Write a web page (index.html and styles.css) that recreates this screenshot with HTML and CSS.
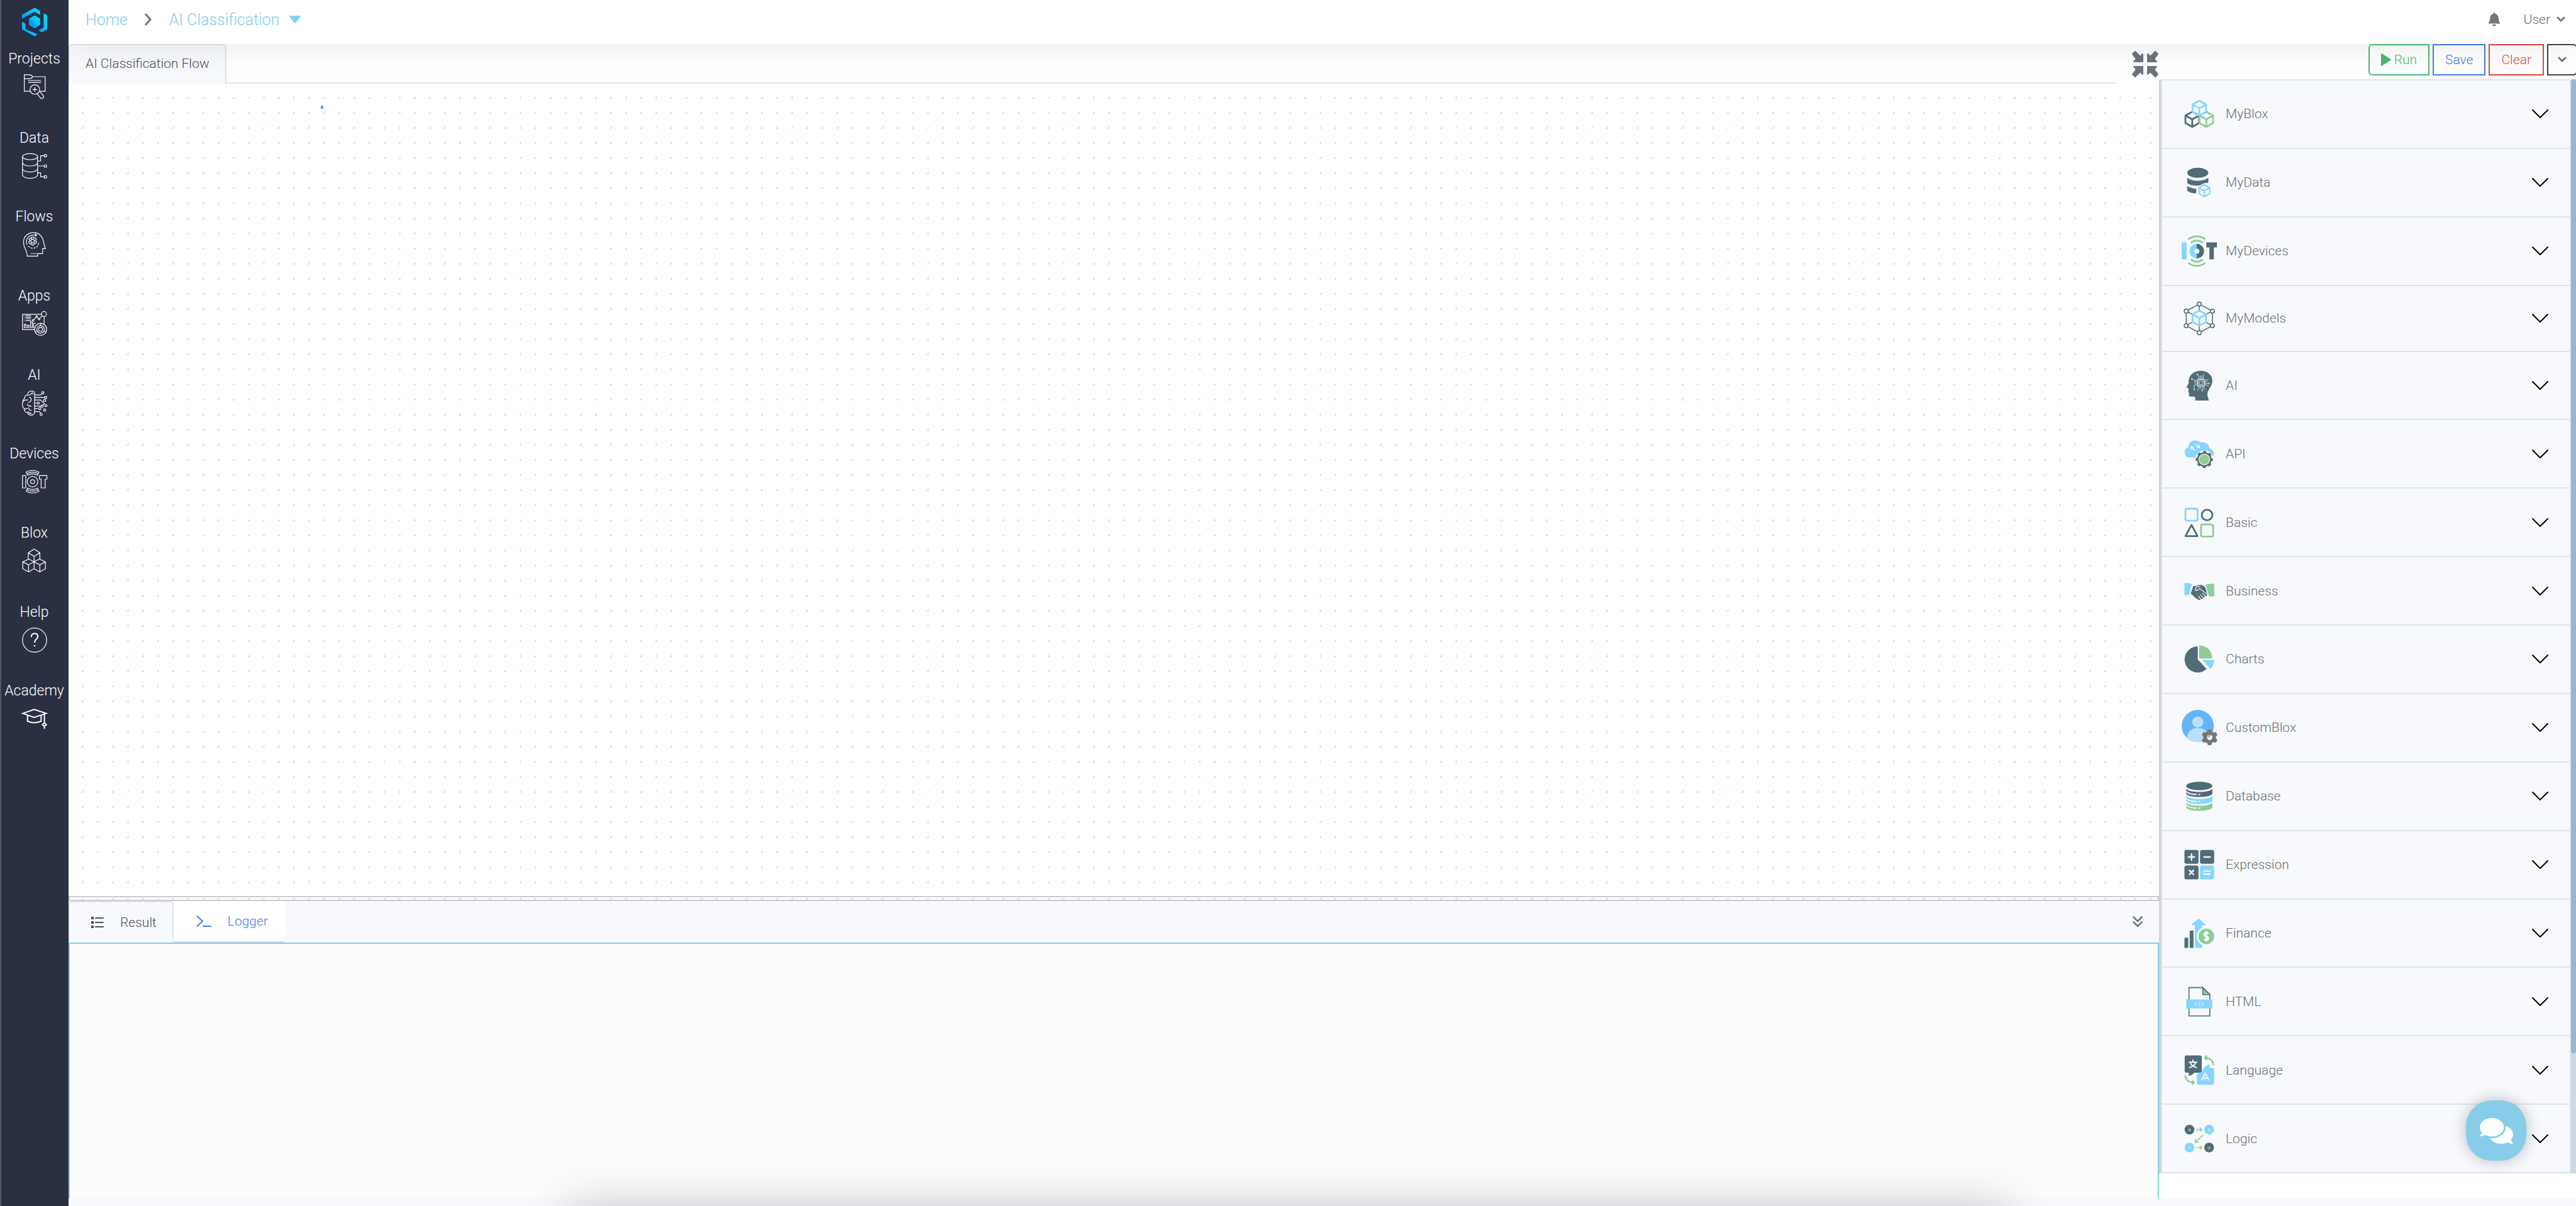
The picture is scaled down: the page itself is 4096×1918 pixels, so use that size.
FILE: index.html
```html
<!DOCTYPE html>
<html lang="en" dir="ltr">
<head>

<meta charset="utf-8">
<title>AI Classification</title>
<link rel="stylesheet" href="styles.css">

</head>
<body>

<!-- shared shapes -->
<svg class="defs" aria-hidden="true">
  <defs>
    <linearGradient id="brand" x1="0" y1="1" x2="1" y2="0">
      <stop offset="0" stop-color="#0a9bff"/>
      <stop offset="1" stop-color="#00e5ff"/>
    </linearGradient>
    <symbol id="cube" viewBox="0 0 32 34">
      <path d="M16 2 29.500 9.500V24.500L16 32 2.500 24.500V9.500zM2.500 9.500 16 17l13.500-7.500M16 17v15" fill="none" stroke="currentColor" stroke-width="3.500"/>
    </symbol>
    <symbol id="down" viewBox="0 0 26 14">
      <path d="M1 1l12 12L25 1" fill="none" stroke="#000" stroke-width="2" stroke-linecap="round"/>
    </symbol>
    <symbol id="down-sm" viewBox="0 0 14 10">
      <path d="M2 2l5 5 5-5" fill="none" stroke="#6c7a87" stroke-width="3" stroke-linecap="round"/>
    </symbol>
  </defs>
</svg>

<nav id="sidebar">
  <a class="logo" href="#" title="Home">
    <svg viewBox="0 0 50 57" width="40" height="46">
      <g fill="url(#brand)">
        <path d="M0 14 25 0l11 6.500v8L25 8 0 22z"/>
        <path d="M0 28l7 4v11l24 10-6 4L0 43z"/>
        <path d="M43 11l7 4v28l-11 6-6-4 10-6z"/>
        <path d="M25 15l11 7v12l-11 7-11-7V22z"/>
      </g>
      <path d="M14 22l11 7v12l-11-7z" fill="#0a8fe8" opacity=".6"/>
      <path d="M25 29l11-7v12l-11 7z" fill="#00b4f5" opacity=".6"/>
    </svg>
  </a>
  <ul>
    <li><a href="#">Projects
      <svg class="line" viewBox="0 0 50 50">
        <path d="M16 34H4.500V1H15q4 0 6 4h25v29H36M4.500 9H15q4 0 6-4M12 12.500h26M12 16.500h26"/>
        <circle cx="25.500" cy="30.500" r="9.500"/>
        <path d="M25.500 26v9M21 30.500h9M30 38.500l7 9q2 2 4.500 0t1-5l-7-8"/>
      </svg></a></li>
    <li><a href="#">Data
      <svg class="line" viewBox="0 0 50 50">
        <ellipse cx="16" cy="6.500" rx="15" ry="6"/>
        <path d="M1 6.500v37q3 6 15 6t15-6v-37M1 19q3 6 15 6t15-6M1 31q3 6 15 6t15-6M31 15h6V4.500h7M31 25h13M31 38.500h6v8h7"/>
        <circle cx="46.500" cy="4.500" r="2.500"/><circle cx="46.500" cy="25" r="2.500"/><circle cx="46.500" cy="46.500" r="2.500"/>
      </svg></a></li>
    <li><a href="#">Flows
      <svg class="line" viewBox="0 0 50 50">
        <path d="M10.500 48C11 36 3 34 3 20 3 8 13 1 23 1c13 0 19 9 21 24l2.500 8H41v10H31v5z"/>
        <path d="M10 25C6 14 14 6 22 6h6M26 3l3 3-3 3"/>
        <path d="M12 28q9 8 18 1 3-4 3-9" stroke-dasharray="4 2"/>
        <circle cx="21" cy="18" r="3.500"/>
        <path d="M19 10h4l.500 2.500 3-1 2 3-2 2.500 2.500 2-1.500 3.500h-3l-.500 3-4 .500-1.500-3-3.500.500-1.500-4 2.500-2-2-3 2.500-2.500 3 1z"/>
        <path d="M18 43h11" stroke-dasharray="2 1"/>
      </svg></a></li>
    <li><a href="#">Apps
      <svg class="line" viewBox="0 0 50 50">
        <path d="M25 36.500H1V6h38M44 10v15M7 9h11M7 12h11M7 15h11M7 18.500h11M4 9h1M4 12h1M4 15h1M4 18.500h1"/>
        <path d="M4.500 26H8v6.500H4.500zM11 28h3v4.500h-3zM17 21h3.500v11.500H17zM26 32.500h-3V24h4M23.500 17l4-5M30.500 12l2 3M35.500 14l5-5"/>
        <circle cx="22" cy="18" r="1.500"/><circle cx="29" cy="10.500" r="1.500"/><circle cx="34" cy="15.500" r="1.500"/>
        <circle cx="43.500" cy="5.500" r="5"/>
        <circle cx="37" cy="36" r="12"/><circle cx="37" cy="36" r="7.500"/><circle cx="37" cy="36" r="4"/>
        <path d="M37 24v4.500M26.500 41l4-2M47.500 41l-4-2"/>
      </svg></a></li>
    <li><a href="#">AI
      <svg class="line" viewBox="0 0 50 50">
        <path d="M25 5v40q-3 5-9 4-4-1-5-5-6 0-7-8-4-4-3-11t4-9q0-6 6-7 1-8 8-8 5 0 6 4M12 10q5-1 7-4t3 2M14 14q5 0 4 5t-6 4M1 25q1-7 11-6M10 27q3 5 9 4M5 36q4 1 6-1M13 34q1 6 6 6M12 42q3 4 7 4"/>
        <path d="M25 9h12l3-3M25 14h20M25 19h12l8 8M25 25h5M25 31h13M25 36h7M25 42h10l2 3M42 29l3-3"/>
        <circle cx="41.500" cy="4.500" r="2.200"/><circle cx="47" cy="14" r="2.200"/><circle cx="45" cy="20" r="2.200"/><circle cx="32.500" cy="25" r="2.200"/><circle cx="40" cy="31" r="2.200"/><circle cx="47.500" cy="30" r="2.200"/><circle cx="35.500" cy="36" r="2.200"/><circle cx="45" cy="39" r="2.200"/><circle cx="38" cy="47.500" r="2.200"/>
      </svg></a></li>
    <li><a href="#">Devices
      <svg class="line" viewBox="0 0 50 50">
        <path d="M1 13h6.500v24.500H1zM34.500 13h15v7H46v17.500h-8V20h-3.500z"/>
        <circle cx="21" cy="25" r="10.500"/><circle cx="21" cy="25" r="4"/>
        <path d="M8 6q13-7 26 0M10 9q11-6 22 0M12 12q9-5 18 0M8 6l4 7M34 6l-4 7M8 44q13 7 26 0M10 41q11 6 22 0M12 38q9 5 18 0M8 44l4-7M34 44l-4-7"/>
      </svg></a></li>
    <li><a href="#">Blox
      <svg class="line" viewBox="0 0 50 50">
        <path d="M24 1.500 35.500 9v12L24 26.500 12.500 21V9zM12.500 9 24 16l11.500-7M24 16v11M13 21.500 1.500 27v13.500L13 47l11-6.500V27M1.500 27 13 33l11-6.500M13 33v14M35.500 21.500 46.500 27v13.500L35.500 47 24 40.500M24 27l11.500 6 11-6M35.500 33v14"/>
      </svg></a></li>
    <li><a href="#">Help
      <svg class="line" viewBox="0 0 50 50">
        <circle cx="25" cy="25" r="24"/>
        <path d="M18.500 19q0-7 6.500-7t6.500 6c0 5-6.500 5-6.500 12" stroke-width="2.500"/>
        <path d="M25 35v2.500" stroke-width="3"/>
      </svg></a></li>
    <li><a href="#">Academy
      <svg class="line bold" viewBox="0 0 50 50">
        <path d="M1.500 14.500 24 6.500l24 8-24 8zM11 19v11q13 6 27 0V19M44.500 16v17M44.500 33l4 4-4 3-4-3zM44.500 40v5"/>
      </svg></a></li>
  </ul>
</nav>

<div id="page">
  <header>
    <div class="crumbs">
      <a href="#">Home</a>
      <svg viewBox="0 0 12 20" width="12" height="20"><path d="M2 2l7 8-7 8" fill="none" stroke="#6c757d" stroke-width="3" stroke-linecap="round"/></svg>
      <a href="#" class="project">AI Classification
        <svg viewBox="0 0 20 12" width="20" height="12"><path d="M2 1h16L10 11z" fill="#87cff0" stroke="#87cff0" stroke-width="2" stroke-linejoin="round"/></svg></a>
    </div>
    <button class="bell" title="Notifications">
      <svg viewBox="0 0 18 22" width="18" height="22"><path d="M9 0q1.500 0 1.500 2C15 3 16 7 16 11q0 3 2 5v1.500H0V16q2-2 2-5 0-8 5.500-9Q7.500 0 9 0zM6 19h6q-1 3-3 3t-3-3z" fill="#757575"/></svg>
    </button>
    <button class="user">User <svg width="14" height="10"><use href="#down-sm"/></svg></button>
  </header>

  <div id="workspace">
    <main>
      <div class="flowbar">
        <div class="flowtabs"><button class="tab selected">AI Classification Flow</button></div>
        <button class="compress" title="Exit Fullscreen">
          <svg viewBox="0 0 42 42" width="42" height="42">
            <path d="M1 5l4-4 8 8 4-4v12H3l4-4zM41 5l-4-4-8 8-4-4v12h14l-4-4zM1 37l4 4 8-8 4 4V25H3l4 4zM41 37l-4 4-8-8-4 4V25h14l-4 4z" fill="#6c757d" stroke="#6c757d" stroke-width="2" stroke-linejoin="round"/>
          </svg>
        </button>
      </div>
      <div id="canvas"><span class="node"></span></div>
      <div class="gutter"></div>
      <div class="outbar">
        <button class="tab selected">
          <svg viewBox="0 0 20 18" width="20" height="18"><path d="M7 2h12M7 9h12M7 16h12" stroke="#495057" stroke-width="2" stroke-linecap="round"/><path d="M0 0h4v4H0zM0 7h4v4H0zM0 14h4v4H0z" fill="#495057"/></svg>
          Result</button>
        <button class="tab active">
          <svg viewBox="0 0 24 20" width="24" height="20"><path d="M1.500 2 10 10l-8.500 8M11 18h12" fill="none" stroke="#3f7ee8" stroke-width="2" stroke-linecap="round"/></svg>
          Logger</button>
        <button class="collapse" title="Collapse">
          <svg viewBox="0 0 16 18" width="16" height="18"><path d="M1.500 1.500 8 8l6.500-6.500M1.500 9.500 8 16l6.500-6.500" fill="none" stroke="#6c757d" stroke-width="2.500" stroke-linecap="round"/></svg>
        </button>
      </div>
      <div id="log"></div>
    </main>

    <aside>
      <div class="actions">
        <button class="run"><svg viewBox="0 0 16 20" width="16" height="20"><path d="M1 1l14 9L1 19z" fill="#48bb6e" stroke="#48bb6e" stroke-width="2" stroke-linejoin="round"/></svg>Run</button>
        <button class="save">Save</button>
        <button class="clear">Clear</button>
        <button class="more" title="More"><svg width="14" height="10"><use href="#down-sm"/></svg></button>
      </div>
      <div class="library">
        <div class="blox">

          <button><svg class="ico" viewBox="0 0 70 70">
            <use href="#cube" x="5" y="29" width="32" height="34" color="#506c77"/>
            <use href="#cube" x="33" y="29" width="32" height="34" color="#90cc95"/>
            <use href="#cube" x="19" y="7" width="32" height="34" color="#87d5ff"/>
          </svg><span>MyBlox</span><svg class="down"><use href="#down"/></svg></button>

          <button><svg class="ico" viewBox="0 0 70 70">
            <ellipse cx="32" cy="16" rx="21" ry="10" fill="#506c77"/>
            <path d="M11 26q8 6 21 6t21-6v10q-9-1-16 5-20 2-26-5zM11 42q6 5 18 6v9q-14 0-18-6z" fill="#506c77"/>
            <use href="#cube" x="32" y="38" width="26" height="27" color="#87d5ff"/>
          </svg><span>MyData</span><svg class="down"><use href="#down"/></svg></button>

          <button><svg class="ico" viewBox="0 0 70 70">
            <path d="M0 18h10v34H0z" fill="#87d5ff"/>
            <path d="M30 21a14 14 0 0 0 0 29v-9.500a5 5 0 0 1 0-10z" fill="#87d5ff"/>
            <path d="M30 21a14 14 0 0 1 0 29v-9.500a5 5 0 0 0 0-10zM49 18h21v10h-6v24h-9V28h-6z" fill="#506c77"/>
            <path d="M13 12q17-12 34 0M18 19q12-9 24 0M18 52q12 9 24 0M13 59q17 12 34 0" fill="none" stroke="#90cc95" stroke-width="3.500"/>
          </svg><span>MyDevices</span><svg class="down"><use href="#down"/></svg></button>

          <button class="short"><svg class="ico" viewBox="0 0 70 70">
            <g fill="none" stroke="#506c77" stroke-width="2">
              <path d="M35 7l26 14v29L35 64 9 50V21zM35 7v16M35 64V47M9 21l14 7M61 21l-14 7M9 50l14-8M61 50l-14-8"/>
              <g fill="#f8f9fd"><circle cx="35" cy="7" r="4"/><circle cx="61" cy="21" r="4"/><circle cx="61" cy="50" r="4"/><circle cx="35" cy="64" r="4"/><circle cx="9" cy="50" r="4"/><circle cx="9" cy="21" r="4"/></g>
            </g>
            <use href="#cube" x="19" y="18" width="32" height="34" color="#87d5ff"/>
          </svg><span>MyModels</span><svg class="down"><use href="#down"/></svg></button>

          <button><svg class="ico" viewBox="0 0 70 70">
            <path d="M27 65v-6q-1-3-5-2-7 1-8-2l1-5-2-2 1-3-1-5-4-1 5-8C13 14 24 6 38 6c14 0 23 9 23 20 0 12-10 16-10 28l3 11z" fill="#506c77"/>
            <g fill="none" stroke="#f8f9fd">
              <path d="M32 23h13v13H32z" stroke-width="1.500"/><path d="M35 26h7v7h-7z"/>
              <path d="M34 22v-5l-2-3M37 22v-7M40 22v-6M43 22v-8l2-2M34 37v5l-3 3M37 37v5M41 37v7M44 37v4l3 3M31 25h-6l-4-3M31 28h-7M31 31h-5M31 34h-6v8M46 25h5l2-3M46 28h4M46 31h7M46 34h4l4 3"/>
              <circle cx="31" cy="13" r="1.200"/><circle cx="20" cy="22" r="1.200"/><circle cx="25" cy="43" r="1.200"/><circle cx="41" cy="45" r="1.200"/><circle cx="54" cy="31" r="1.200"/>
            </g>
          </svg><span>AI</span><svg class="down"><use href="#down"/></svg></button>

          <button><svg class="ico" viewBox="0 0 70 70">
            <path d="M17 42q-11 0-11-10 0-8 7-10Q14 8 26 8q8 0 11 4 15-3 19 12 9 3 8 13l-3 3-4-1-2-8-6-2q-9-1-12 7l-6 6z" fill="#87d5ff"/>
            <path d="M26 28l-7-7v5M19 21h5M27 15l8 7v-5M35 22h-5" stroke="#f8f9fd" stroke-width="2" fill="none"/>
            <circle cx="45" cy="46" r="18" fill="#f8f9fd"/>
            <circle cx="45" cy="46" r="13" fill="none" stroke="#506c77" stroke-width="3"/>
            <circle cx="45" cy="46" r="15" fill="none" stroke="#506c77" stroke-width="4" stroke-dasharray="5.890" stroke-dashoffset="2.950"/>
            <circle cx="45" cy="46" r="10" fill="#90cc95"/>
          </svg><span>API</span><svg class="down"><use href="#down"/></svg></button>

          <button><svg class="ico" viewBox="0 0 70 70">
            <g fill="none" stroke-width="3.500" stroke-linejoin="round">
              <rect x="7.500" y="7.500" width="24" height="24" rx="3" stroke="#87d5ff"/>
              <circle cx="50.500" cy="20" r="10.500" stroke="#506c77"/>
              <path d="M19.500 40 31.500 62h-24z" stroke="#506c77"/>
              <rect x="38.500" y="39" width="24" height="24" rx="3" stroke="#90cc95"/>
            </g>
          </svg><span>Basic</span><svg class="down"><use href="#down"/></svg></button>

          <button><svg class="ico" viewBox="0 0 70 70">
            <path d="M5.500 19q8-1 15 2l-5 20q-1 2-3 2h-7z" fill="#87d5ff"/>
            <path d="M64.500 20.500q-9-1-17 2l6 20q1 3 3 3h8z" fill="#90cc95"/>
            <path d="M23 25h5q8-4 15-1 4 2 5 8l3 9-2 4-3 1-2 2-2 2-3 1-4 2-7-4-10-9z" fill="#506c77"/>
            <path d="M37 26h-7q-6 8-1 8 4-1 7-4l14 11M41 39l7 7M37 42l6 7M33 45l5 6" fill="none" stroke="#f8f9fd" stroke-width="1.500"/>
          </svg><span>Business</span><svg class="down"><use href="#down"/></svg></button>

          <button><svg class="ico" viewBox="0 0 70 70">
            <path d="M32 10v26l17.500 19A26 26 0 1 1 32 10z" fill="#506c77"/>
            <path d="M35 8q24 1 26 26H35z" fill="#90cc95"/>
            <path d="M41 37h23.500q0 11-7.500 18z" fill="#87d5ff"/>
          </svg><span>Charts</span><svg class="down"><use href="#down"/></svg></button>

          <button><svg class="ico" viewBox="0 0 70 70">
            <circle cx="32" cy="32" r="32" fill="#64b5f6"/>
            <circle cx="32" cy="24" r="11" fill="#bbdefb"/>
            <path d="M10 55q4-19 22-19t22 19q-9 9-22 9t-22-9z" fill="#bbdefb"/>
            <path d="M52 39h7l1 4 4 2 4-1 3 6-3 3v3l3 4-3 5-5-1-3 2-1 4h-7l-1-4-4-2-4 1-3-5 3-4v-3l-3-3 3-6 4 1 4-2zM55.500 49a5.500 5.500 0 1 0 .1 0z" fill="#757575"/>
          </svg><span>CustomBlox</span><svg class="down"><use href="#down"/></svg></button>

          <button><svg class="ico" viewBox="0 0 70 70">
            <ellipse cx="35" cy="15" rx="26" ry="8.500" fill="#506c77"/>
            <path d="M9 21q6 6 26 6t26-6v10q-5 6-26 6T9 31z" fill="#506c77"/>
            <path d="M9 35q6 6 26 6t26-6v10q-5 6-26 6T9 45z" fill="#87d5ff"/>
            <path d="M9 48.500q6 6 26 6t26-6v10q-5 6-26 6t-26-6z" fill="#90cc95"/>
            <path d="M9 26q6 6 21 6M9 40q6 6 21 6M9 53q6 6 21 6M33 32h4M33 46h4M33 59h4" fill="none" stroke="#f8f9fd" stroke-width="2.500"/>
          </svg><span>Database</span><svg class="down"><use href="#down"/></svg></button>

          <button><svg class="ico" viewBox="0 0 70 70">
            <g fill="#506c77"><rect x="5.500" y="6" width="28" height="27.500" rx="4"/><rect x="36.500" y="6" width="28" height="27.500" rx="4"/><rect x="5.500" y="37" width="28" height="27.500" rx="4"/></g>
            <rect x="36.500" y="37" width="28" height="27.500" rx="4" fill="#87d5ff"/>
            <path d="M13.500 20h12M19.500 14v12M44.500 20h12M15.500 46.500l8 8M23.500 46.500l-8 8M44.500 48h12M44.500 54h12" stroke="#f8f9fd" stroke-width="3" stroke-linecap="round"/>
          </svg><span>Expression</span><svg class="down"><use href="#down"/></svg></button>

          <button><svg class="ico" viewBox="0 0 70 70">
            <path d="M5.500 47q0-3 3-3H13v20.500H5.500zM16 30h7.500v34.500H16z" fill="#506c77"/>
            <path d="M33.500 6 47.500 18v1.500h-7v45h-14v-45h-7V18z" fill="#87d5ff"/>
            <circle cx="49" cy="41.500" r="19" fill="#f8f9fd"/><circle cx="49" cy="41.500" r="15.500" fill="#90cc95"/>
            <path d="M53 37q-1-3-4-3-4 0-4 3.500t4 4 4 4-4 3.500q-3 0-4-3M49 31v21" fill="none" stroke="#f8f9fd" stroke-width="3"/>
          </svg><span>Finance</span><svg class="down"><use href="#down"/></svg></button>

          <button><svg class="ico" viewBox="0 0 70 70">
            <path d="M14.500 7H42l14 14v42.500H14.500z" fill="none" stroke="#506c77" stroke-width="2"/>
            <path d="M42 7v14h14z" fill="#90cc95" stroke="#506c77" stroke-width="2"/>
            <rect x="9" y="30.500" width="52" height="18" rx="1" fill="#87d5ff"/>
            <path d="M31 36l-5 3.500 5 3.500M39 36l5 3.500-5 3.500M37 34l-4 11" fill="none" stroke="#f8f9fd" stroke-width="1.200"/>
          </svg><span>HTML</span><svg class="down"><use href="#down"/></svg></button>

          <button><svg class="ico" viewBox="0 0 70 70">
            <path d="M10 5.500h26q4 0 4 4V36q0 4-4 4H25q-5 6-11 6v-6h-4q-4 0-4-4V9.500q0-4 4-4z" fill="#506c77"/>
            <path d="M14 19h17M22.500 14v5M17 19q2 8 13 11M28 19q-2 8-13 11" fill="none" stroke="#f8f9fd" stroke-width="2.500"/>
            <path d="M34.500 40.500q6-1 8-7 4-8 13-10v7h5q4 0 4 4V60q0 4-4 4h-26q-4 0-4-4V44q0-3 4-3.500z" fill="#87d5ff"/>
            <path d="M40 55l7-14 7 14M43 51h9" fill="none" stroke="#f8f9fd" stroke-width="2.500"/>
            <path d="M63 24q-1-12-16-14M7 46q2 13 17 14" fill="none" stroke="#90cc95" stroke-width="3" stroke-linecap="round"/>
            <path d="M44 10.500l6-5.500v11zM26 59.500l-5-5v10z" fill="#90cc95" stroke="#90cc95"/>
          </svg><span>Language</span><svg class="down"><use href="#down"/></svg></button>

          <button><svg class="ico" viewBox="0 0 70 70">
            <g fill="#506c77"><circle cx="15.500" cy="17" r="9.700"/><circle cx="54.500" cy="52.500" r="9.700"/></g>
            <g fill="#87d5ff"><circle cx="54.500" cy="17" r="9.700"/><circle cx="15.500" cy="52.500" r="9.700"/></g>
            <path d="M29 17h11M36 13l4 4-4 4M29 52.500h11M36 48.500l4 4-4 4M43 27 27 42M27 35v7h7" fill="none" stroke="#90cc95" stroke-width="2"/>
            <g class="glyphs"><text x="15.500" y="20">a</text><text x="54.500" y="20">b</text><text x="15.500" y="55">c</text><text x="54.500" y="56">d</text></g>
          </svg><span>Logic</span><svg class="down"><use href="#down"/></svg></button>

        </div>
        <div class="scroll"><div class="thumb"></div></div>
      </div>
    </aside>
  </div>
</div>

<button id="chat" title="Chat">
  <svg viewBox="0 0 576 512" width="53" height="47"><path fill="#fff" d="M416 192c0-88.400-93.100-160-208-160S0 103.600 0 192c0 34.300 14.100 65.900 38 92-13.400 30.200-35.500 54.200-35.800 54.500-2.200 2.300-2.800 5.700-1.500 8.700S4.800 352 8 352c36.600 0 66.900-12.300 88.700-25 32.200 15.700 70.300 25 111.300 25 114.900 0 208-71.600 208-160zm122 220c23.900-26 38-57.700 38-92 0-66.900-53.500-124.200-129.300-148.100.9 6.600 1.300 13.300 1.300 20.100 0 105.900-107.700 192-240 192-10.800 0-21.300-.8-31.700-1.900C207.800 439.600 281.800 480 368 480c41 0 79.100-9.200 111.300-25 21.800 12.700 52.100 25 88.700 25 3.200 0 6.100-1.900 7.300-4.800 1.300-2.900.7-6.300-1.500-8.700-.3-.3-22.400-24.200-35.800-54.500z"/></svg>
</button>
<div id="drawer"></div>

</body>
</html>
```

FILE: styles.css
```css
* {
  box-sizing: border-box;
}

body {
  margin: 0;
  height: 100vh;
  display: flex;
  overflow: hidden;
  background-color: #f8f9fd;
  color: #666f77;
  font-family: Roboto, sans-serif;
  font-size: 21px;
  font-weight: 300;
}

svg {
  display: block;
  flex: none;
}

.defs {
  position: absolute;
  width: 0;
  height: 0;
}

a {
  text-decoration: none;
}

button {
  display: flex;
  align-items: center;
  margin: 0;
  padding: 0;
  border: 0;
  background: none;
  color: inherit;
  font: inherit;
  line-height: 30px;
}

/* left menu */

#sidebar {
  position: relative;
  z-index: 3;
  flex: none;
  width: 109px;
  background-color: #2a2f42;
  box-shadow: inset 2px 0 #525966;
}

.logo {
  display: flex;
  justify-content: center;
  height: 70px;
  padding-top: 12px;
}

#sidebar ul {
  display: flex;
  flex-direction: column;
  height: 1131px;
  margin: 0;
  padding: 0;
  list-style-type: none;
}

#sidebar li {
  flex: 1;
}

#sidebar li a {
  display: flex;
  flex-direction: column;
  align-items: center;
  gap: 9px;
  padding-top: 9px;
  color: white;
  font-size: 23px;
  line-height: 30px;
}

.line {
  width: 40px;
  height: 40px;
  overflow: visible;
  fill: none;
  stroke: white;
  stroke-width: 1.5;
}

.bold {
  stroke-width: 2.5;
}

/* top bar */

#page {
  flex: 1;
  min-width: 0;
  display: flex;
  flex-direction: column;
}

header {
  position: relative;
  z-index: 2;
  flex: none;
  display: flex;
  align-items: center;
  height: 70px;
  padding: 0 17px 8px 27px;
  background-color: white;
  box-shadow: 0 0 60px rgba(0, 0, 0, 0.1);
}

.crumbs {
  flex: 1;
  display: flex;
  align-items: center;
  gap: 27px;
  font-size: 25px;
}

.crumbs a {
  color: #82cdf0;
}

.crumbs .project {
  display: flex;
  align-items: center;
  gap: 14px;
}

.bell {
  margin-right: 38px;
}

.user {
  gap: 10px;
}

/* editor */

#workspace {
  flex: 1;
  display: flex;
  min-height: 0;
  padding-bottom: 12px;
}

main {
  flex: 1;
  min-width: 0;
  display: flex;
  flex-direction: column;
  background-color: white;
}

.flowbar {
  flex: none;
  display: flex;
  height: 63px;
}

.flowtabs {
  flex: 1;
  display: flex;
  border-bottom: 2px solid #dce4ec;
}

.tab {
  color: #495057;
}

.tab.selected {
  border: 2px solid #dce4ec;
  border-bottom: 0;
  border-radius: 6px 6px 0 0;
  background-color: #f8f9fd;
}

.flowtabs .tab {
  margin-bottom: -2px;
  padding: 0 25px 4px;
}

.compress {
  width: 68px;
  justify-content: flex-end;
  padding: 0 1px 0 0;
}

#canvas {
  position: relative;
  flex: 1;
  background-image: radial-gradient(circle at 100% 100%, #cfe7f0 3px, transparent 4px);
  background-size: 24px 24px;
}

.node {
  position: absolute;
  left: 401px;
  top: 35px;
  width: 4px;
  height: 5px;
  background-color: #42a5f5;
}

.gutter {
  flex: none;
  height: 8px;
  border: 2px solid #cbcbcb;
  background-image: radial-gradient(circle at 100% 100%, #cfe7f0 3px, transparent 4px);
  background-size: 24px 24px;
  background-position: -2px 4px;
}

.outbar {
  flex: none;
  display: flex;
  height: 66px;
  background-color: #f8f9fd;
}

.outbar .tab {
  gap: 26px;
  padding: 0 25px 0 34px;
}

.outbar .active {
  padding: 0 27px 0 36px;
  border-bottom: 2px solid #dce4ec;
  background-color: white;
  color: #3f7ee8;
}

.collapse {
  margin-left: auto;
  margin-right: 26px;
}

#log {
  flex: none;
  height: 407px;
  border: 2px solid #84cde9;
  border-bottom: 0;
  background-color: #fcfcfc;
}

/* right column */

aside {
  flex: none;
  width: 663px;
  padding-bottom: 40px;
  display: flex;
  flex-direction: column;
  background-color: white;
}

.actions {
  flex: none;
  display: flex;
  justify-content: flex-end;
  gap: 5px;
  height: 56px;
  margin-right: -2px;
}

.actions button {
  height: 50px;
  padding: 0 18px;
  border: 2px solid;
  font-size: 21px;
}

.actions .run {
  gap: 5px;
  border-radius: 6px 0 0 6px;
  color: #48bb6e;
}

.actions .save {
  color: #3f7ee8;
}

.actions .clear {
  color: #dc4c48;
}

.actions .more {
  padding: 0 15px;
  border-radius: 0 6px 6px 0;
  color: #3c434b;
}

.library {
  flex: 1;
  display: flex;
  min-height: 0;
  border-left: 3px solid #d3d3d3;
}

.blox {
  flex: 1;
  display: flex;
  flex-direction: column;
  border: 2px solid #dce4ec;
  border-bottom: 0;
  border-radius: 4px 4px 0 0;
  background-color: #f8f9fd;
}

.blox button {
  height: 109px;
  padding: 0 34px 0 31px;
  border-bottom: 2px solid #dce4ec;
}

.blox .short {
  height: 105px;
}

.blox span {
  flex: 1;
  margin-left: 14px;
  text-align: left;
}

.ico {
  width: 56px;
  height: 56px;
  overflow: visible;
}

.down {
  width: 26px;
  height: 14px;
}

.glyphs {
  fill: #f8f9fd;
  font-size: 10px;
  text-anchor: middle;
}

.scroll {
  width: 8px;
  background-color: #cdd8e3;
}

.thumb {
  height: 89%;
  border-radius: 5px;
  background-color: #9fb4ca;
}

/* floating */

#chat {
  position: fixed;
  right: 79px;
  bottom: 72px;
  z-index: 4;
  justify-content: center;
  width: 96px;
  height: 96px;
  border-radius: 41px;
  background-color: #87cdea;
  box-shadow: 0 0 24px rgba(0, 0, 0, 0.25);
}

/* closed drawer below the window, only its shadow shows */
#drawer {
  position: fixed;
  z-index: 1;
  left: 22%;
  right: 22%;
  top: 100%;
  height: 100px;
  box-shadow: 0 0 80px rgba(0, 0, 0, 0.2);
}
```
